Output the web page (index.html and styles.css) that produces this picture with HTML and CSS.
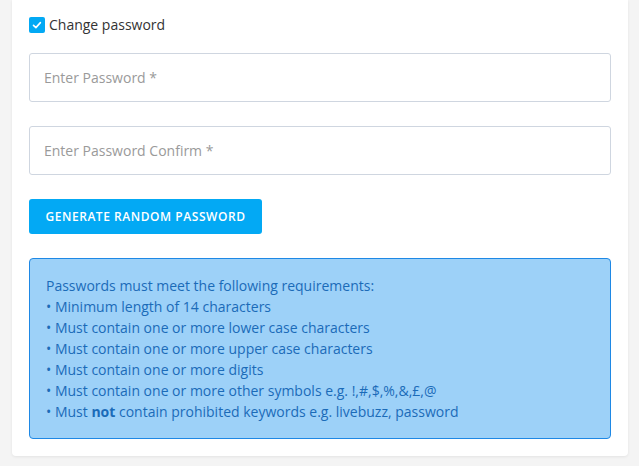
FILE: index.html
```html
<!DOCTYPE html>
<html lang="en">
<head>
<meta charset="utf-8">
<title>Change password</title>
<link rel="stylesheet" href="styles.css">
</head>
<body>
<div class="page">
  <div class="card">
    <label class="check-row">
      <span class="checkbox">
        <svg viewBox="0 0 16 16" width="16" height="16"><path d="M4.5 8.3 L6.9 10.6 L11.4 5.6" fill="none" stroke="#fff" stroke-width="1.6" stroke-linecap="round" stroke-linejoin="round"/></svg>
      </span>
      <span class="check-label">Change password</span>
    </label>
    <input class="field" type="password" placeholder="Enter Password *">
    <input class="field" type="password" placeholder="Enter Password Confirm *">
    <div class="btn-row"><button class="btn" type="button">Generate random password</button></div>
    <div class="alert">
      <div>Passwords must meet the following requirements:</div>
      <div>• Minimum length of 14 characters</div>
      <div>• Must contain one or more lower case characters</div>
      <div>• Must contain one or more upper case characters</div>
      <div>• Must contain one or more digits</div>
      <div>• Must contain one or more other symbols e.g. !,#,$,%,&amp;,£,@</div>
      <div>• Must <strong>not</strong> contain prohibited keywords e.g. livebuzz, password</div>
    </div>
  </div>
</div>
</body>
</html>
```
FILE: styles.css
```css
* { box-sizing: border-box; }
html, body { margin: 0; padding: 0; }
body {
  background: #f4f4f4;
  font-family: "Open Sans", "Liberation Sans", sans-serif;
  font-size: 14px;
  color: #333;
}
.page {
  padding: 0 11px 0 12px;
  height: 466px;
}
.card {
  background: #fff;
  border-radius: 0 0 4px 4px;
  box-shadow: 0 1px 3px rgba(0,0,0,0.07);
  padding: 15px 17px 17px 17px;
  display: flex;
  flex-direction: column;
}
.check-row {
  display: flex;
  align-items: center;
  gap: 4px;
  height: 20px;
}
.checkbox {
  width: 16px;
  height: 16px;
  background: #03a9f4;
  border-radius: 2px;
  display: flex;
}
.check-label {
  font-size: 14px;
  color: #333;
  line-height: 20px;
}
.field {
  margin-top: 18px;
  height: 49px;
  width: 100%;
  border: 1px solid #cfd6e0;
  border-radius: 3px;
  padding: 0 14px;
  font-family: "Open Sans", "Liberation Sans", sans-serif;
  font-size: 14px;
  color: #333;
  background: #fff;
  outline: none;
}
.field + .field { margin-top: 24px; }
.field::placeholder { color: #9a9a9a; }
.btn-row { margin-top: 24px; display: flex; }
.btn {
  height: 35px;
  width: 233px;
  background: #03a9f4;
  color: #fff;
  border: none;
  border-radius: 3px;
  padding: 0;
  font-family: "Open Sans", "Liberation Sans", sans-serif;
  font-size: 12px;
  font-weight: 600;
  text-transform: uppercase;
  letter-spacing: 0.55px;
}
.alert {
  margin-top: 24px;
  background: #9dd1f8;
  border: 1px solid #1e88e5;
  border-radius: 4px;
  padding: 16px;
  color: #1b6bb8;
  font-size: 14px;
  line-height: 21px;
}
.alert strong { font-weight: 700; }
```
